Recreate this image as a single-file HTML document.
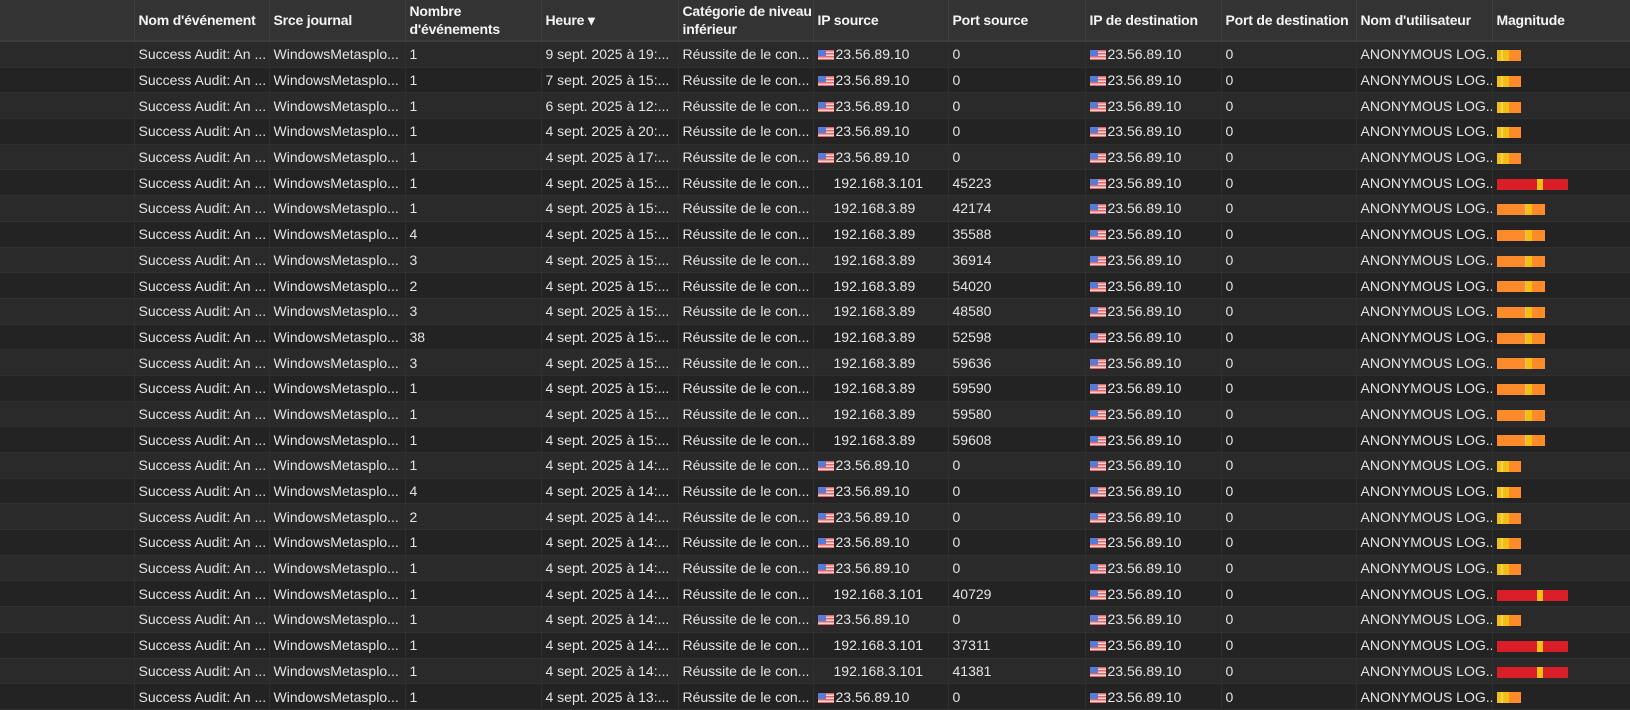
<!DOCTYPE html>
<html><head><meta charset="utf-8">
<style>
html,body{margin:0;padding:0;background:#1e1e1e;width:1630px;height:710px;overflow:hidden}
table{border-collapse:collapse;table-layout:fixed;width:1630px;font-family:"Liberation Sans",sans-serif;font-size:14px;color:#e4e4e4}
th{background:#333;color:#f4f4f4;font-weight:bold;text-align:left;height:40px;padding:0 4px;border-right:1px solid #3f3f3f;border-bottom:2px solid #3d3d3d;line-height:18px;vertical-align:middle;white-space:nowrap;overflow:hidden;font-size:14px;letter-spacing:-0.2px}
td{height:24.7px;padding:0 4px;border-right:1px solid #303030;border-bottom:1px solid #303030;white-space:nowrap;overflow:hidden}
tr:nth-child(odd) td{background:#232323}
tr:nth-child(even) td{background:#2a2a2a}
.f{display:inline-block;width:16px;height:10px;vertical-align:-1px;margin-right:2px;background:repeating-linear-gradient(#e06868 0 1.5px,#f6d4d4 1.5px 3px);position:relative}
.f:before{content:"";position:absolute;left:0;top:0;width:8px;height:6px;background:#5a7ad6}
.p{padding-left:20px}
.b{display:inline-block;height:11px;vertical-align:middle;position:relative}
.s{width:24px;background:linear-gradient(90deg,#f2c012 0 4px,#f6d25a 4px 6px,#f2c012 6px 12px,#ff8a2a 12px)}
.o{width:48px;background:linear-gradient(90deg,#ff8a2a 0 28px,#f2b88a 28px 29px,#f2c012 29px 35px,#ff8a2a 35px)}
.r{width:71px;background:linear-gradient(90deg,#da1e28 0 40px,#f2c012 40px 46px,#da1e28 46px)}
</style></head><body>
<table>
<colgroup><col style="width:134px"><col style="width:135px"><col style="width:136px"><col style="width:136px"><col style="width:137px"><col style="width:135px"><col style="width:135px"><col style="width:137px"><col style="width:136px"><col style="width:135px"><col style="width:136px"><col style="width:138px"></colgroup>
<tr><th></th><th>Nom d'événement</th><th>Srce journal</th><th>Nombre<br>d'événements</th><th>Heure &#9662;</th><th>Catégorie de niveau<br>inférieur</th><th>IP source</th><th>Port source</th><th>IP de destination</th><th>Port de destination</th><th>Nom d'utilisateur</th><th>Magnitude</th></tr>
<tr><td></td><td>Success Audit: An ...</td><td>WindowsMetasplo...</td><td>1</td><td>9 sept. 2025 à 19:...</td><td>Réussite de le con...</td><td><span class="f"></span>23.56.89.10</td><td>0</td><td><span class="f"></span>23.56.89.10</td><td>0</td><td>ANONYMOUS LOG...</td><td><span class="b s"></span></td></tr>
<tr><td></td><td>Success Audit: An ...</td><td>WindowsMetasplo...</td><td>1</td><td>7 sept. 2025 à 15:...</td><td>Réussite de le con...</td><td><span class="f"></span>23.56.89.10</td><td>0</td><td><span class="f"></span>23.56.89.10</td><td>0</td><td>ANONYMOUS LOG...</td><td><span class="b s"></span></td></tr>
<tr><td></td><td>Success Audit: An ...</td><td>WindowsMetasplo...</td><td>1</td><td>6 sept. 2025 à 12:...</td><td>Réussite de le con...</td><td><span class="f"></span>23.56.89.10</td><td>0</td><td><span class="f"></span>23.56.89.10</td><td>0</td><td>ANONYMOUS LOG...</td><td><span class="b s"></span></td></tr>
<tr><td></td><td>Success Audit: An ...</td><td>WindowsMetasplo...</td><td>1</td><td>4 sept. 2025 à 20:...</td><td>Réussite de le con...</td><td><span class="f"></span>23.56.89.10</td><td>0</td><td><span class="f"></span>23.56.89.10</td><td>0</td><td>ANONYMOUS LOG...</td><td><span class="b s"></span></td></tr>
<tr><td></td><td>Success Audit: An ...</td><td>WindowsMetasplo...</td><td>1</td><td>4 sept. 2025 à 17:...</td><td>Réussite de le con...</td><td><span class="f"></span>23.56.89.10</td><td>0</td><td><span class="f"></span>23.56.89.10</td><td>0</td><td>ANONYMOUS LOG...</td><td><span class="b s"></span></td></tr>
<tr><td></td><td>Success Audit: An ...</td><td>WindowsMetasplo...</td><td>1</td><td>4 sept. 2025 à 15:...</td><td>Réussite de le con...</td><td class="p">192.168.3.101</td><td>45223</td><td><span class="f"></span>23.56.89.10</td><td>0</td><td>ANONYMOUS LOG...</td><td><span class="b r"></span></td></tr>
<tr><td></td><td>Success Audit: An ...</td><td>WindowsMetasplo...</td><td>1</td><td>4 sept. 2025 à 15:...</td><td>Réussite de le con...</td><td class="p">192.168.3.89</td><td>42174</td><td><span class="f"></span>23.56.89.10</td><td>0</td><td>ANONYMOUS LOG...</td><td><span class="b o"></span></td></tr>
<tr><td></td><td>Success Audit: An ...</td><td>WindowsMetasplo...</td><td>4</td><td>4 sept. 2025 à 15:...</td><td>Réussite de le con...</td><td class="p">192.168.3.89</td><td>35588</td><td><span class="f"></span>23.56.89.10</td><td>0</td><td>ANONYMOUS LOG...</td><td><span class="b o"></span></td></tr>
<tr><td></td><td>Success Audit: An ...</td><td>WindowsMetasplo...</td><td>3</td><td>4 sept. 2025 à 15:...</td><td>Réussite de le con...</td><td class="p">192.168.3.89</td><td>36914</td><td><span class="f"></span>23.56.89.10</td><td>0</td><td>ANONYMOUS LOG...</td><td><span class="b o"></span></td></tr>
<tr><td></td><td>Success Audit: An ...</td><td>WindowsMetasplo...</td><td>2</td><td>4 sept. 2025 à 15:...</td><td>Réussite de le con...</td><td class="p">192.168.3.89</td><td>54020</td><td><span class="f"></span>23.56.89.10</td><td>0</td><td>ANONYMOUS LOG...</td><td><span class="b o"></span></td></tr>
<tr><td></td><td>Success Audit: An ...</td><td>WindowsMetasplo...</td><td>3</td><td>4 sept. 2025 à 15:...</td><td>Réussite de le con...</td><td class="p">192.168.3.89</td><td>48580</td><td><span class="f"></span>23.56.89.10</td><td>0</td><td>ANONYMOUS LOG...</td><td><span class="b o"></span></td></tr>
<tr><td></td><td>Success Audit: An ...</td><td>WindowsMetasplo...</td><td>38</td><td>4 sept. 2025 à 15:...</td><td>Réussite de le con...</td><td class="p">192.168.3.89</td><td>52598</td><td><span class="f"></span>23.56.89.10</td><td>0</td><td>ANONYMOUS LOG...</td><td><span class="b o"></span></td></tr>
<tr><td></td><td>Success Audit: An ...</td><td>WindowsMetasplo...</td><td>3</td><td>4 sept. 2025 à 15:...</td><td>Réussite de le con...</td><td class="p">192.168.3.89</td><td>59636</td><td><span class="f"></span>23.56.89.10</td><td>0</td><td>ANONYMOUS LOG...</td><td><span class="b o"></span></td></tr>
<tr><td></td><td>Success Audit: An ...</td><td>WindowsMetasplo...</td><td>1</td><td>4 sept. 2025 à 15:...</td><td>Réussite de le con...</td><td class="p">192.168.3.89</td><td>59590</td><td><span class="f"></span>23.56.89.10</td><td>0</td><td>ANONYMOUS LOG...</td><td><span class="b o"></span></td></tr>
<tr><td></td><td>Success Audit: An ...</td><td>WindowsMetasplo...</td><td>1</td><td>4 sept. 2025 à 15:...</td><td>Réussite de le con...</td><td class="p">192.168.3.89</td><td>59580</td><td><span class="f"></span>23.56.89.10</td><td>0</td><td>ANONYMOUS LOG...</td><td><span class="b o"></span></td></tr>
<tr><td></td><td>Success Audit: An ...</td><td>WindowsMetasplo...</td><td>1</td><td>4 sept. 2025 à 15:...</td><td>Réussite de le con...</td><td class="p">192.168.3.89</td><td>59608</td><td><span class="f"></span>23.56.89.10</td><td>0</td><td>ANONYMOUS LOG...</td><td><span class="b o"></span></td></tr>
<tr><td></td><td>Success Audit: An ...</td><td>WindowsMetasplo...</td><td>1</td><td>4 sept. 2025 à 14:...</td><td>Réussite de le con...</td><td><span class="f"></span>23.56.89.10</td><td>0</td><td><span class="f"></span>23.56.89.10</td><td>0</td><td>ANONYMOUS LOG...</td><td><span class="b s"></span></td></tr>
<tr><td></td><td>Success Audit: An ...</td><td>WindowsMetasplo...</td><td>4</td><td>4 sept. 2025 à 14:...</td><td>Réussite de le con...</td><td><span class="f"></span>23.56.89.10</td><td>0</td><td><span class="f"></span>23.56.89.10</td><td>0</td><td>ANONYMOUS LOG...</td><td><span class="b s"></span></td></tr>
<tr><td></td><td>Success Audit: An ...</td><td>WindowsMetasplo...</td><td>2</td><td>4 sept. 2025 à 14:...</td><td>Réussite de le con...</td><td><span class="f"></span>23.56.89.10</td><td>0</td><td><span class="f"></span>23.56.89.10</td><td>0</td><td>ANONYMOUS LOG...</td><td><span class="b s"></span></td></tr>
<tr><td></td><td>Success Audit: An ...</td><td>WindowsMetasplo...</td><td>1</td><td>4 sept. 2025 à 14:...</td><td>Réussite de le con...</td><td><span class="f"></span>23.56.89.10</td><td>0</td><td><span class="f"></span>23.56.89.10</td><td>0</td><td>ANONYMOUS LOG...</td><td><span class="b s"></span></td></tr>
<tr><td></td><td>Success Audit: An ...</td><td>WindowsMetasplo...</td><td>1</td><td>4 sept. 2025 à 14:...</td><td>Réussite de le con...</td><td><span class="f"></span>23.56.89.10</td><td>0</td><td><span class="f"></span>23.56.89.10</td><td>0</td><td>ANONYMOUS LOG...</td><td><span class="b s"></span></td></tr>
<tr><td></td><td>Success Audit: An ...</td><td>WindowsMetasplo...</td><td>1</td><td>4 sept. 2025 à 14:...</td><td>Réussite de le con...</td><td class="p">192.168.3.101</td><td>40729</td><td><span class="f"></span>23.56.89.10</td><td>0</td><td>ANONYMOUS LOG...</td><td><span class="b r"></span></td></tr>
<tr><td></td><td>Success Audit: An ...</td><td>WindowsMetasplo...</td><td>1</td><td>4 sept. 2025 à 14:...</td><td>Réussite de le con...</td><td><span class="f"></span>23.56.89.10</td><td>0</td><td><span class="f"></span>23.56.89.10</td><td>0</td><td>ANONYMOUS LOG...</td><td><span class="b s"></span></td></tr>
<tr><td></td><td>Success Audit: An ...</td><td>WindowsMetasplo...</td><td>1</td><td>4 sept. 2025 à 14:...</td><td>Réussite de le con...</td><td class="p">192.168.3.101</td><td>37311</td><td><span class="f"></span>23.56.89.10</td><td>0</td><td>ANONYMOUS LOG...</td><td><span class="b r"></span></td></tr>
<tr><td></td><td>Success Audit: An ...</td><td>WindowsMetasplo...</td><td>1</td><td>4 sept. 2025 à 14:...</td><td>Réussite de le con...</td><td class="p">192.168.3.101</td><td>41381</td><td><span class="f"></span>23.56.89.10</td><td>0</td><td>ANONYMOUS LOG...</td><td><span class="b r"></span></td></tr>
<tr><td></td><td>Success Audit: An ...</td><td>WindowsMetasplo...</td><td>1</td><td>4 sept. 2025 à 13:...</td><td>Réussite de le con...</td><td><span class="f"></span>23.56.89.10</td><td>0</td><td><span class="f"></span>23.56.89.10</td><td>0</td><td>ANONYMOUS LOG...</td><td><span class="b s"></span></td></tr>
</table>
</body></html>
